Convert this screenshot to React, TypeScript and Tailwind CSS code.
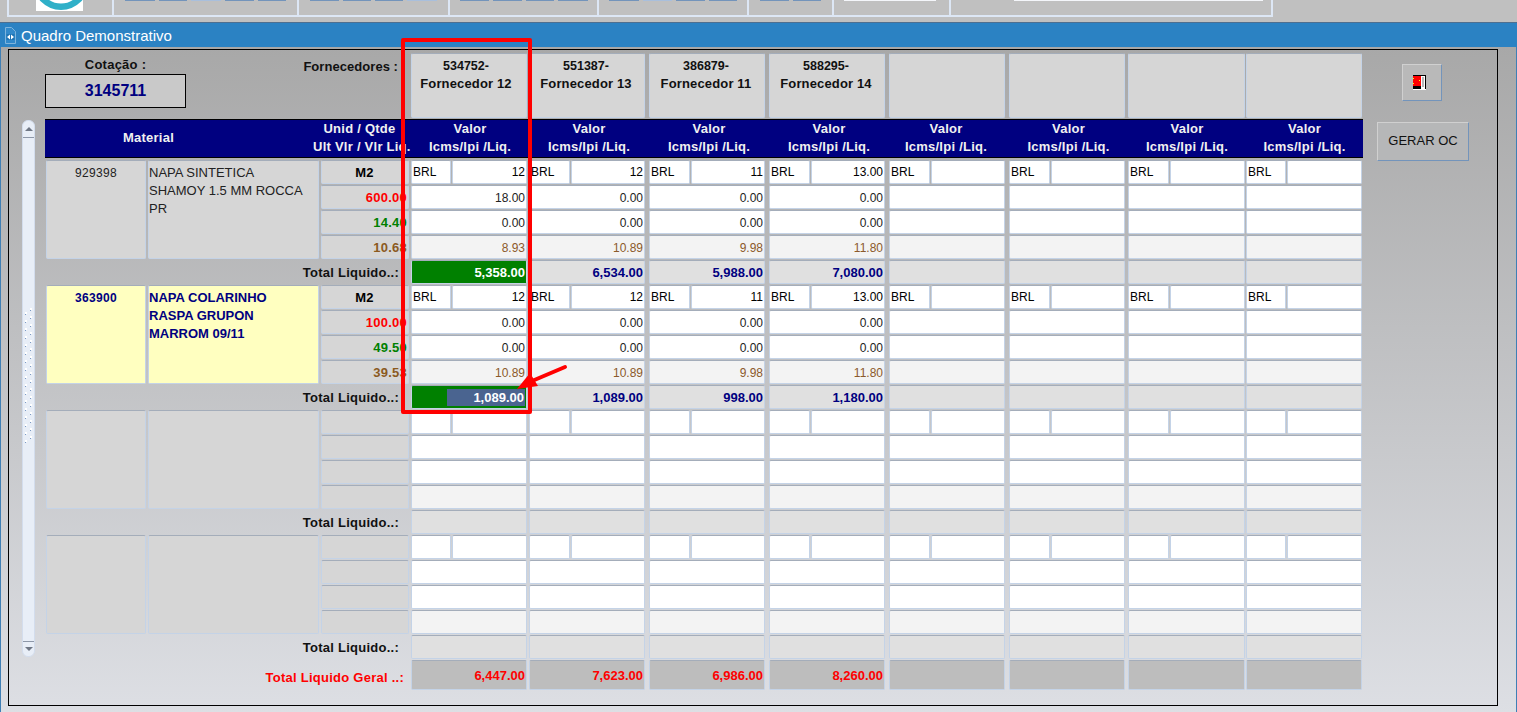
import React from 'react';

const GRID = 'grid grid-cols-[102px_173px_91px_118px_120px_120px_120px_120px_119px_118px_117px]';
// gap to the next cell differs per supplier column in the original form
const GAPS = ['mr-[2px]', 'mr-[4px]', 'mr-[4px]', 'mr-[4px]', 'mr-[4px]', 'mr-[3px]', 'mr-[1px]', 'mr-[1px]'];
const CUR_W = ['w-[40px]', 'w-[41px]', 'w-[41px]', 'w-[41px]', 'w-[41px]', 'w-[41px]', 'w-[41px]', 'w-[40px]'];

const FIELD = 'border border-[#c4d3e7] border-t-[#a4adba] rounded-[2px] overflow-hidden whitespace-nowrap';
const BOLD = 'font-bold text-[13px] tracking-[0.25px]';
const BOLD_NUM = 'font-bold text-[13px]';

const suppliers = [
  { code: '534752-', name: 'Fornecedor 12' },
  { code: '551387-', name: 'Fornecedor 13' },
  { code: '386879-', name: 'Fornecedor 11' },
  { code: '588295-', name: 'Fornecedor 14' },
  null,
  null,
  null,
  null,
];

interface Quote {
  cur?: string;
  qty?: string;
  a?: string;
  b?: string;
  liq?: string;
}

interface Block {
  code?: string;
  lines?: string[];
  selected?: boolean;
  unit?: string;
  last?: string;
  pct?: string;
  net?: string;
  quotes: Quote[];
  totals: string[];
}

const blocks: Block[] = [
  {
    code: '929398',
    lines: ['NAPA SINTETICA', 'SHAMOY 1.5 MM ROCCA', 'PR'],
    unit: 'M2',
    last: '600.00',
    pct: '14.40',
    net: '10.68',
    quotes: [
      { cur: 'BRL', qty: '12', a: '18.00', b: '0.00', liq: '8.93' },
      { cur: 'BRL', qty: '12', a: '0.00', b: '0.00', liq: '10.89' },
      { cur: 'BRL', qty: '11', a: '0.00', b: '0.00', liq: '9.98' },
      { cur: 'BRL', qty: '13.00', a: '0.00', b: '0.00', liq: '11.80' },
      { cur: 'BRL' },
      { cur: 'BRL' },
      { cur: 'BRL' },
      { cur: 'BRL' },
    ],
    totals: ['5,358.00', '6,534.00', '5,988.00', '7,080.00', '', '', '', ''],
  },
  {
    code: '363900',
    lines: ['NAPA COLARINHO', 'RASPA GRUPON', 'MARROM 09/11'],
    selected: true,
    unit: 'M2',
    last: '100.00',
    pct: '49.50',
    net: '39.53',
    quotes: [
      { cur: 'BRL', qty: '12', a: '0.00', b: '0.00', liq: '10.89' },
      { cur: 'BRL', qty: '12', a: '0.00', b: '0.00', liq: '10.89' },
      { cur: 'BRL', qty: '11', a: '0.00', b: '0.00', liq: '9.98' },
      { cur: 'BRL', qty: '13.00', a: '0.00', b: '0.00', liq: '11.80' },
      { cur: 'BRL' },
      { cur: 'BRL' },
      { cur: 'BRL' },
      { cur: 'BRL' },
    ],
    totals: ['1,089.00', '1,089.00', '998.00', '1,180.00', '', '', '', ''],
  },
  { quotes: Array(8).fill({}), totals: Array(8).fill('') },
  { quotes: Array(8).fill({}), totals: Array(8).fill('') },
];

const grandTotals = ['6,447.00', '7,623.00', '6,986.00', '8,260.00', '', '', '', ''];

const DoorIcon = () => (
  <svg width="13" height="15" viewBox="0 0 13 15" shapeRendering="crispEdges">
    <rect x="0" y="0" width="13" height="15" fill="#000" />
    <rect x="8" y="1" width="4" height="13" fill="#fff" />
    <rect x="9" y="2" width="2" height="10" fill="#b8b8b8" />
    <rect x="0" y="1" width="8" height="10" fill="#ff0000" />
    <rect x="6" y="5" width="1" height="1" fill="#ffff00" />
    <rect x="0" y="3" width="1" height="1" fill="#ffff00" />
    <rect x="0" y="8" width="1" height="1" fill="#ffff00" />
    <rect x="0" y="14" width="13" height="1" fill="#fff" />
  </svg>
);

const WindowIcon = () => (
  <svg width="11" height="17" viewBox="0 0 11 17">
    <path d="M0.5 0.5h6l4 4v12h-10z" fill="#3289ca" stroke="#7fb4dc" />
    <path d="M1.5 7h8v6h-8z" fill="#1f74b4" />
    <path d="M2 10l3-2.5v5zM9 10L6 7.5v5z" fill="#fff" />
  </svg>
);

const Logo = () => (
  <svg width="47" height="11" viewBox="0 0 47 11" className="block">
    <circle cx="25" cy="-18" r="24.75" fill="none" stroke="#2fb0c8" strokeWidth="6.5" />
  </svg>
);

const ToolButtons = ({ widths, light }: { widths: string[]; light?: number }) => (
  <div className="flex gap-[4px]">
    {widths.map((w, i) => (
      <div key={i} className={`${w} h-px ${i === light ? 'bg-[#a9bfdc]' : 'bg-[#7394bb]'}`} />
    ))}
  </div>
);

const Toolbar = () => (
  <div className="h-[22px] shrink-0 bg-[#c0c0c0]">
    <div className="ml-[7px] flex h-[17px] w-[1266px] border-x-2 border-b-2 border-[#dde7f5]">
      <div className="w-[105px] shrink-0 border-r-2 border-[#dde7f5] pl-[27px]">
        <div className="h-[11px] w-[47px] bg-white">
          <Logo />
        </div>
      </div>
      <div className="w-[185px] shrink-0 border-r-2 border-[#dde7f5] pl-[11px]">
        <ToolButtons widths={['w-[30px]', 'w-[28px]', 'w-[30px]', 'w-[29px]', 'w-[28px]']} light={2} />
      </div>
      <div className="w-[151px] shrink-0 border-r-2 border-[#dde7f5] pl-[11px]">
        <ToolButtons widths={['w-[29px]', 'w-[28px]', 'w-[28px]', 'w-[30px]']} light={3} />
      </div>
      <div className="w-[149px] shrink-0 border-r-2 border-[#dde7f5] pl-[10px]">
        <ToolButtons widths={['w-[29px]', 'w-[29px]', 'w-[28px]', 'w-[30px]']} />
      </div>
      <div className="w-[150px] shrink-0 border-r-2 border-[#dde7f5] pl-[10px]">
        <ToolButtons widths={['w-[30px]', 'w-[29px]', 'w-[29px]', 'w-[28px]']} light={1} />
      </div>
      <div className="w-[85px] shrink-0 border-r-2 border-[#dde7f5] pl-[11px]">
        <ToolButtons widths={['w-[29px]', 'w-[28px]']} />
      </div>
      <div className="w-[117px] shrink-0 border-r-2 border-[#dde7f5] pl-[10px]">
        <div className="h-px w-[92px] bg-[#f4f6fa]" />
      </div>
      <div className="flex-1 pl-[63px]">
        <div className="h-px w-[249px] bg-[#f4f6fa]" />
      </div>
    </div>
  </div>
);

const Scrollbar = () => (
  <div className="ml-[13px] mt-[70px] flex h-[537px] w-[13px] shrink-0 flex-col rounded-[6px] border border-[#d3dded] bg-[#e8eef7]">
    <div className="flex h-[17px] items-center justify-center border-b border-[#8d97a8]">
      <div className="h-0 w-0 border-x-[4px] border-b-[4px] border-x-transparent border-b-[#6f7785]" />
    </div>
    <div className="flex flex-1 items-center justify-center pb-[28px]">
      <svg width="9" height="136" viewBox="0 0 9 136">
        {Array.from({ length: 17 }).map((_, i) => (
          <g key={i}>
            <rect x="6" y={i * 8} width="2" height="2" fill="#ffffff" />
            <rect x="6" y={i * 8 + 2} width="1" height="1" fill="#7b9ac4" />
            <rect x="1" y={i * 8 + 4} width="2" height="2" fill="#ffffff" />
            <rect x="1" y={i * 8 + 6} width="1" height="1" fill="#7b9ac4" />
          </g>
        ))}
      </svg>
    </div>
    <div className="flex h-[15px] items-center justify-center border-t border-[#8d97a8]">
      <div className="h-0 w-0 border-x-[4px] border-t-[4px] border-x-transparent border-t-[#6f7785]" />
    </div>
  </div>
);

const Text = ({ children, className = '' }: { children?: React.ReactNode; className?: string }) => (
  <div className={`${FIELD} h-[24px] pt-[2px] text-right pr-[1px] ${className}`}>{children}</div>
);

const BlockRows = ({ block }: { block: Block }) => {
  const sel = block.selected;
  const rows = [0, 1, 2, 3];
  return (
    <>
      <div
        className={`${FIELD} row-span-4 mx-px mb-px pt-[3px] text-center text-[12px] tracking-[0.3px] ${
          sel ? 'bg-[#ffffc0] font-bold text-[#000080]' : 'bg-[#d6d6d6] text-[#222]'
        }`}
      >
        {block.code}
      </div>
      <div
        className={`${FIELD} row-span-4 mx-px mb-px pt-[3px] text-[13px] leading-[18px] ${
          sel ? 'bg-[#ffffc0] font-bold text-[#000080]' : 'bg-[#d6d6d6] text-[#222]'
        }`}
      >
        {block.lines?.map((l) => (
          <div key={l}>{l}</div>
        ))}
      </div>
      {rows.map((r) => (
        <React.Fragment key={r}>
          <div className="ml-px mr-[2px]">
            {r === 0 && <Text className={`bg-[#d6d6d6] !text-center ${BOLD} text-black`}>{block.unit}</Text>}
            {r === 1 && <Text className={`bg-[#d6d6d6] ${BOLD} text-[#ff0000]`}>{block.last}</Text>}
            {r === 2 && <Text className={`bg-[#d6d6d6] ${BOLD} text-[#008000]`}>{block.pct}</Text>}
            {r === 3 && <Text className={`bg-[#d6d6d6] ${BOLD} text-[#8b5a1e]`}>{block.net}</Text>}
          </div>
          {block.quotes.map((q, i) => (
            <div key={i} className={GAPS[i]}>
              {r === 0 && (
                <div className="flex gap-px text-[12px] text-black">
                  <div className={`${FIELD} h-[24px] ${CUR_W[i]} shrink-0 bg-white pl-[1px] pt-[2px]`}>{q.cur}</div>
                  <div className={`${FIELD} h-[24px] flex-1 bg-white pr-[1px] pt-[2px] text-right`}>{q.qty}</div>
                </div>
              )}
              {(r === 1 || r === 2) && (
                <Text className="bg-white text-[12px] text-[#222] !pt-[3px]">{r === 1 ? q.a : q.b}</Text>
              )}
              {r === 3 && <Text className="bg-[#f3f3f3] text-[12px] text-[#8b5a2b] !pt-[3px]">{q.liq}</Text>}
            </div>
          ))}
        </React.Fragment>
      ))}
      <div className={`col-span-3 pr-[12px] pt-[2.5px] text-right ${BOLD} text-[#111]`}>Total Liquido..:</div>
      {block.totals.map((t, i) => {
        const winner = i === 0 && block.code;
        return (
          <div key={i} className={GAPS[i]}>
            <div
              className={`${FIELD} h-[24px] pt-[2px] pr-[1px] text-right ${BOLD_NUM} ${
                winner ? 'bg-[#008000] text-white' : 'bg-[#e0e0e0] text-[#000080]'
              }`}
            >
              {sel && i === 0 ? (
                <span className="inline-block h-[17px] w-[78px] bg-[#4a6490] pr-px leading-[17px]">{t}</span>
              ) : (
                t
              )}
            </div>
          </div>
        );
      })}
    </>
  );
};

const App: React.FC = () => {
  return (
    <div className="relative flex h-[712px] w-[1517px] flex-col overflow-hidden font-['Liberation_Sans',Arial,sans-serif]">
      <Toolbar />
      <div className="flex h-[25px] shrink-0 items-center border-t border-[#4e6f90] bg-[#2b82c3] pl-[5px]">
        <WindowIcon />
        <span className="ml-[5px] pt-[2px] text-[15px] text-white">Quadro Demonstrativo</span>
      </div>
      <div className="flex-1 border-x border-x-[#3f7fb5] bg-gradient-to-b from-[#a8a8a8] to-[#dddfe4] pl-[7px] pt-[2px]">
        <div className="flex h-[657px] w-[1490px] border border-black">
          <Scrollbar />
          <div className="ml-[10px] w-[1318px] shrink-0 pt-[3px]">
            <div className={GRID}>
              <div className="col-span-3 row-span-1 flex h-[66px]">
                <div className="w-[141px] pt-[2px] text-center">
                  <div className={`${BOLD} text-[#111]`}>Cotação :</div>
                  <div className="mt-[-1px] flex h-[34px] items-center justify-center border border-black bg-[#c9c9c9] text-[16px] font-bold text-[#000080]">
                    3145711
                  </div>
                </div>
                <div className={`w-[212px] pt-[4px] text-right font-bold text-[13px] tracking-[0.05px] text-[#111]`}>Fornecedores :</div>
              </div>
              {suppliers.map((s, i) => (
                <div key={i} className={GAPS[i]}>
                  <div
                    className={`${FIELD} h-[65px] bg-[#d6d6d6] pt-[3px] text-center font-bold text-[13px] tracking-[0.15px] leading-[18px] text-[#111] ${
                      i === 0 ? 'pr-[6px]' : 'pr-[2px]'
                    }`}
                  >
                    {s && (
                      <>
                        <div className="text-[12.5px] tracking-normal">{s.code}</div>
                        <div>{s.name}</div>
                      </>
                    )}
                  </div>
                </div>
              ))}
            </div>
            <div className={`${GRID} h-[39px] items-center border-y border-black bg-[#000080] pb-[2px] ${BOLD} leading-[18px] text-[#f0f0f0]`}>
              <div className="col-span-2 pr-[68px] text-center">Material</div>
              <div className="-ml-[7px] w-[97px] whitespace-nowrap text-center">
                <div className="pr-[4px]">Unid / Qtde</div>
                <div>Ult Vlr / Vlr Liq.</div>
              </div>
              {suppliers.map((_, i) => (
                <div key={i} className={`text-center ${i === 4 ? 'pr-[6px]' : ''}`}>
                  <div>Valor</div>
                  <div>Icms/Ipi /Liq.</div>
                </div>
              ))}
            </div>
            <div className={`${GRID} mt-[2px] auto-rows-[25px]`}>
              {blocks.map((b, i) => (
                <BlockRows key={i} block={b} />
              ))}
              <div className={`col-span-3 h-[30px] pr-[7px] pt-[8px] text-right ${BOLD} text-[#ff0000]`}>Total Liquido Geral ..:</div>
              {grandTotals.map((t, i) => (
                <div key={i} className={GAPS[i]}>
                  <div className={`${FIELD} h-[30px] bg-[#bdbdbd] pr-[1px] pt-[5px] text-right ${BOLD_NUM} text-[#ff0000]`}>{t}</div>
                </div>
              ))}
            </div>
          </div>
          <div className="flex flex-1 flex-col">
            <div className="ml-[39px] mt-[14px] flex h-[37px] w-[40px] items-center justify-center border border-[#d0d0d0] border-b-[#7394bb] border-r-[#7394bb] bg-[#b9b9b9] pr-[5px]">
              <DoorIcon />
            </div>
            <div className="ml-[14px] mt-[21px] flex h-[39px] w-[92px] items-center justify-center border border-[#d0d0d0] border-b-[#7394bb] border-r-[#7394bb] bg-[#b6b7b8] pb-[2px] text-[13px] text-[#111]">
              GERAR OC
            </div>
          </div>
        </div>
      </div>
      <div className="absolute left-[401px] top-[38px] h-[376px] w-[131px] rounded-[2px] border-[4px] border-[#ff0000]" />
      <svg className="absolute left-[510px] top-[360px]" width="62" height="34" viewBox="0 0 62 34">
        <path d="M55 7 L22 21" stroke="#ff0000" strokeWidth="4" strokeLinecap="round" fill="none" />
        <path d="M7 29 L20 13 L28 26 Z" fill="#ff0000" />
      </svg>
    </div>
  );
};

export default App;
